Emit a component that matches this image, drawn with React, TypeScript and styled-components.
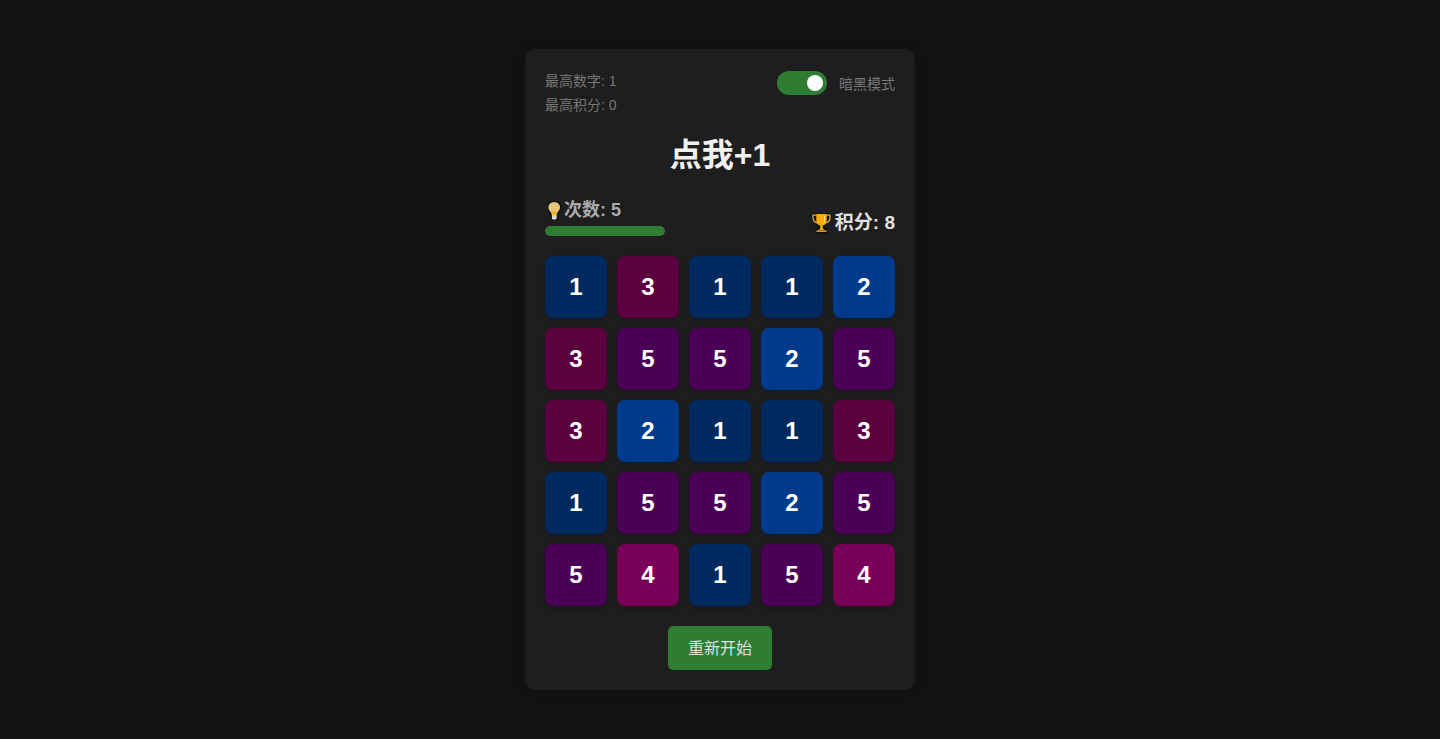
import React, { useState } from "react";
import styled, { createGlobalStyle } from "styled-components";

const GlobalStyle = createGlobalStyle`
  *, *::before, *::after { box-sizing: border-box; }
  body {
    margin: 0;
    background: #121212;
    color: #f0f0f0;
    font-family: "Liberation Sans", "Noto Sans CJK SC", sans-serif;
  }
`;

const Page = styled.main`
  min-height: 100vh;
  display: flex;
  align-items: center;
  justify-content: center;
`;

const Panel = styled.section`
  width: 100%;
  max-width: 390px;
  padding: 20px;
  border-radius: 10px;
  background: #1e1e1e;
  box-shadow: 0 0 10px rgba(0, 0, 0, 0.1);
  display: flex;
  flex-direction: column;
`;

const Header = styled.header`
  display: flex;
  justify-content: space-between;
  align-items: flex-start;
`;

const Records = styled.div`
  color: #777;
  font-size: 14px;
  line-height: 24px;
`;

const ModeSwitch = styled.label`
  display: flex;
  align-items: flex-start;
  gap: 12px;
  padding-top: 2px;
  color: #777;
  font-size: 14px;
  line-height: 26px;
  cursor: pointer;
`;

const Toggle = styled.input`
  appearance: none;
  display: flex;
  align-items: center;
  width: 50px;
  height: 24px;
  margin: 0;
  padding: 4px;
  border-radius: 12px;
  background: #555;
  cursor: pointer;

  &::before {
    content: "";
    width: 16px;
    height: 16px;
    border-radius: 50%;
    background: #fff;
  }

  &:checked {
    justify-content: flex-end;
    background: #2e7d32;
  }
`;

const Title = styled.h1`
  margin: 18px 0 22px;
  font-size: 32px;
  line-height: 40px;
  text-align: center;
`;

const Status = styled.div`
  display: flex;
  justify-content: space-between;
  align-items: center;
  margin-bottom: 20px;
`;

const Moves = styled.div`
  display: flex;
  flex-direction: column;
  gap: 2px;
  color: #aaa;
  font-size: 18px;
  font-weight: bold;
  line-height: 27px;
`;

const IconText = styled.div`
  display: flex;
  align-items: center;
`;

const Track = styled.div`
  width: 120px;
  height: 10px;
  border-radius: 5px;
  background: #333;
  overflow: hidden;
`;

const Fill = styled.div`
  height: 100%;
  border-radius: 5px;
  background: #2e7d32;
`;

const Score = styled(IconText)`
  padding-top: 12px;
  gap: 3px;
  color: #e0e0e0;
  font-size: 19px;
  font-weight: bold;
  line-height: 24px;
`;

const Board = styled.div`
  display: grid;
  grid-template-columns: repeat(5, 1fr);
  gap: 10px;
`;

const Tile = styled.button<{ $color: string }>`
  aspect-ratio: 1;
  padding: 0;
  border: 0;
  border-radius: 8px;
  background: ${(p) => p.$color};
  box-shadow: 0 2px 5px rgba(0, 0, 0, 0.2);
  color: #fff;
  font: inherit;
  font-size: 24px;
  font-weight: bold;
  cursor: pointer;
`;

const Restart = styled.button`
  align-self: center;
  margin-top: 20px;
  padding: 11px 20px 9px;
  border: 0;
  border-radius: 5px;
  background: #2e7d32;
  color: #e0e0e0;
  font: inherit;
  font-size: 16px;
  line-height: 24px;
  cursor: pointer;
`;

const BulbIcon = () => (
  <svg width="19" height="22" viewBox="0 0 19 22" aria-hidden="true">
    <path d="M9.2 1.3c-3.700 0-6.500 2.600-6.500 6.200 0 2.400 1.300 3.600 2.400 5 .7.900.9 1.700 1.100 2.800v2.700c0 1.300 1.400 2.200 3 2.200s3-.9 3-2.200v-2.700c.2-1.100.4-1.900 1.100-2.800 1.100-1.400 2.400-2.600 2.400-5 0-3.600-2.800-6.200-6.500-6.200z" fill="#e8c77b" stroke="#101010" strokeWidth="1.300" />
    <path d="M7 11.500l1.200 1.600 1-1.500 1 1.500 1.200-1.600M8.300 13v2.800M10.100 13v2.800" fill="none" stroke="#f5a800" strokeWidth="1.100" />
    <path d="M7 15.500h4.400v2.500c0 .8-1 1.400-2.200 1.400S7 18.800 7 18z" fill="#e8e8e8" />
    <path d="M7 17h4.400" stroke="#999" strokeWidth=".6" />
  </svg>
);

const TrophyIcon = () => (
  <svg width="21" height="22" viewBox="0 0 21 22" aria-hidden="true">
    <g fill="none" stroke="#101010" strokeWidth="3.400" strokeLinejoin="round">
      <path d="M5.500 3.200H2v2.500c0 3 1.500 4.700 4.700 5.200M15.500 3.200H19v2.500c0 3-1.500 4.700-4.700 5.200" />
      <path d="M5.500 2.500h10V9c0 2.500-1.700 4-3.700 4.500v4h3v2.300H6.200v-2.300h3v-4C7.200 13 5.500 11.500 5.500 9z" />
    </g>
    <path d="M5.500 3.200H2v2.500c0 3 1.500 4.700 4.700 5.200M15.500 3.200H19v2.500c0 3-1.500 4.700-4.700 5.200" fill="none" stroke="#dcae55" strokeWidth="1.300" />
    <path d="M5.300 2h10.400v7c0 2.500-1.700 4-3.900 4.600v2.900l1.700 1.500h-6l1.700-1.500v-2.900C7 13 5.300 11.500 5.300 9z" fill="#f9ac0c" />
    <path d="M13.600 4v4.500c0 1.700-.6 2.500-1.600 3.100" fill="none" stroke="#ffd98a" strokeWidth="1" />
    <path d="M5.500 18.300h10v1.700h-10z" fill="#c79a4b" />
  </svg>
);

const TILE_COLORS: Record<number, string> = {
  1: "#002960",
  2: "#003a8c",
  3: "#5c003f",
  4: "#780058",
  5: "#4a0055",
};

const START = [
  1, 3, 1, 1, 2,
  3, 5, 5, 2, 5,
  3, 2, 1, 1, 3,
  1, 5, 5, 2, 5,
  5, 4, 1, 5, 4,
];

const MAX_MOVES = 5;

export default function App() {
  const [cells, setCells] = useState(START);
  const [moves, setMoves] = useState(MAX_MOVES);

  const bump = (index: number) => {
    if (moves === 0) return;
    setCells(cells.map((n, i) => (i === index ? (n % 5) + 1 : n)));
    setMoves(moves - 1);
  };

  const restart = () => {
    setCells(START);
    setMoves(MAX_MOVES);
  };

  return (
    <Page>
      <GlobalStyle />
      <Panel>
        <Header>
          <Records>
            <div>最高数字: 1</div>
            <div>最高积分: 0</div>
          </Records>
          <ModeSwitch>
            <Toggle type="checkbox" defaultChecked />
            <span>暗黑模式</span>
          </ModeSwitch>
        </Header>
        <Title>点我+1</Title>
        <Status>
          <Moves>
            <IconText>
              <BulbIcon />
              <span>次数: {moves}</span>
            </IconText>
            <Track>
              <Fill style={{ width: `${(moves / MAX_MOVES) * 100}%` }} />
            </Track>
          </Moves>
          <Score>
            <TrophyIcon />
            <span>积分: 8</span>
          </Score>
        </Status>
        <Board>
          {cells.map((n, i) => (
            <Tile key={i} type="button" $color={TILE_COLORS[n]} onClick={() => bump(i)}>
              {n}
            </Tile>
          ))}
        </Board>
        <Restart type="button" onClick={restart}>重新开始</Restart>
      </Panel>
    </Page>
  );
}
